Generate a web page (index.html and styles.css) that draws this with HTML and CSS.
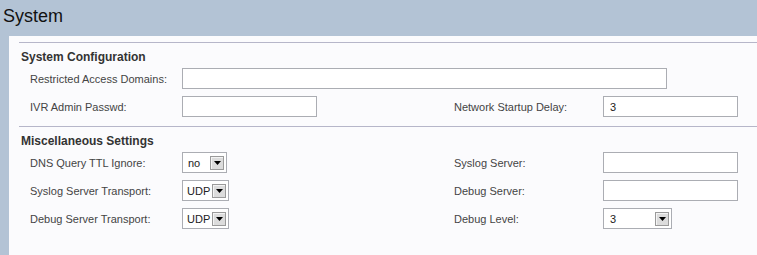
FILE: index.html
```html
<!DOCTYPE html>
<html lang="en">
<head>
    <meta charset="UTF-8">
    <title>System</title>
    <link rel="stylesheet" href="styles.css">
</head>
<body>
    <h1 class="page-title">System</h1>

    <div class="panel">
        <div class="section">
            <h2>System Configuration</h2>
            <div class="rows">
                <label>Restricted Access Domains:</label>
                <input type="text" class="field wide">

                <label>IVR Admin Passwd:</label>
                <input type="password" class="field">
                <label class="right">Network Startup Delay:</label>
                <input type="text" class="field" value="3">
            </div>
        </div>

        <div class="section">
            <h2>Miscellaneous Settings</h2>
            <div class="rows">
                <label>DNS Query TTL Ignore:</label>
                <div class="select small"><span class="value">no</span><span class="arrow"><svg width="7" height="4" viewBox="0 0 7 4"><path d="M0 0h7L3.5 4z"/></svg></span></div>
                <label class="right">Syslog Server:</label>
                <input type="text" class="field">

                <label>Syslog Server Transport:</label>
                <div class="select"><span class="value">UDP</span><span class="arrow"><svg width="7" height="4" viewBox="0 0 7 4"><path d="M0 0h7L3.5 4z"/></svg></span></div>
                <label class="right">Debug Server:</label>
                <input type="text" class="field">

                <label>Debug Server Transport:</label>
                <div class="select"><span class="value">UDP</span><span class="arrow"><svg width="7" height="4" viewBox="0 0 7 4"><path d="M0 0h7L3.5 4z"/></svg></span></div>
                <label class="right">Debug Level:</label>
                <div class="select level"><span class="value">3</span><span class="arrow"><svg width="7" height="4" viewBox="0 0 7 4"><path d="M0 0h7L3.5 4z"/></svg></span></div>
            </div>
        </div>
    </div>
</body>
</html>
```

FILE: styles.css
```css
* {
    box-sizing: border-box;
}

body {
    margin: 0;
    height: 255px;
    overflow: hidden;
    background-color: #b3c3d5;
    font-family: "Liberation Sans", Arial, sans-serif;
    font-size: 11px;
    color: #444;
    display: flex;
    flex-direction: column;
}

.page-title {
    flex-shrink: 0;
    margin: 0;
    height: 36px;
    padding: 5px 3px 0;
    font-size: 18px;
    font-weight: normal;
    line-height: 22px;
    color: #111;
}

.panel {
    flex: 1;
    margin-left: 9px;
    padding-top: 6px;
    background-color: #fbfbfd;
}

.section {
    margin-left: 10px;
    border-top: 1px solid #b6b6c9;
    padding-bottom: 9px;
}

.section h2 {
    margin: 0 0 4px;
    padding: 7px 0 0 2px;
    font-size: 12px;
    line-height: 14px;
    color: #333;
}

.rows {
    display: grid;
    grid-template-columns: 152px 272px 149px 1fr;
    grid-auto-rows: 21px;
    row-gap: 7px;
    padding-left: 11px;
    align-items: center;
}

.rows label {
    grid-column: 1;
}

.rows label.right {
    grid-column: 3;
}

.field {
    width: 135px;
    height: 21px;
    margin: 0;
    padding: 0 6px;
    border: 1px solid #abadb3;
    background: #fff;
    font: inherit;
    color: #222;
}

.field.wide {
    grid-column: 2 / 4;
    width: 485px;
}

.select {
    display: flex;
    align-items: center;
    justify-content: space-between;
    width: 47px;
    height: 21px;
    padding: 0 2px 0 4px;
    border: 1px solid #abadb3;
    background: #fff;
    color: #222;
}

.select.small {
    width: 45px;
    padding-left: 5px;
}

.select.level {
    width: 69px;
    padding-left: 6px;
}

.arrow {
    display: flex;
    align-items: center;
    justify-content: center;
    width: 14px;
    height: 14px;
    border: 1px solid #9a9a9a;
    background: #dcdcdc;
    box-shadow: inset 1px 1px 0 #f4f4f4;
}

.arrow svg {
    display: block;
}
```
